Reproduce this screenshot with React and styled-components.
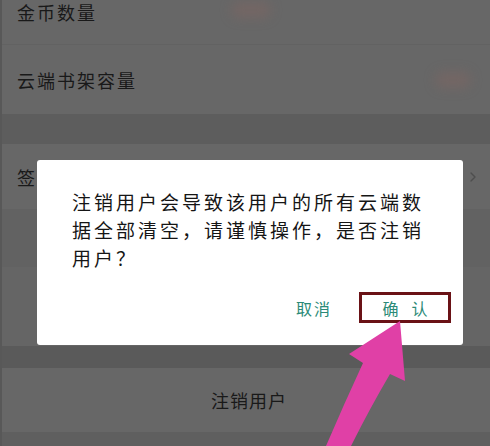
import React from "react";
import styled, { createGlobalStyle } from "styled-components";
import { ChevronRight } from "lucide-react";

const GlobalStyle = createGlobalStyle`
  html, body {
    margin: 0;
    padding: 0;
    background: #676767;
    overflow: hidden;
  }
  * { box-sizing: border-box; }
`;

const Screen = styled.div`
  position: relative;
  width: 490px;
  height: 446px;
  overflow: hidden;
  background: #5e5e5e;
  border-left: 2px solid #585858;
  font-family: "Noto Sans CJK SC", "Noto Sans", sans-serif;
  display: flex;
  flex-direction: column;
`;

const Row = styled.div`
  height: ${(p) => p.$h}px;
  flex: none;
  display: flex;
  align-items: ${(p) => (p.$top ? "flex-start" : "center")};
  justify-content: ${(p) => (p.$center ? "center" : "space-between")};
  padding: ${(p) => (p.$top ? "2px 9px 0 15px" : "0 9px 0 15px")};
  background: ${(p) => p.$bg || "#676767"};
  border-bottom: ${(p) => (p.$line ? "1px solid #626262" : "none")};
`;

const Gap = styled.div`
  height: ${(p) => p.$h}px;
  flex: none;
  background: ${(p) => p.$bg || "#5d5d5d"};
`;

const Label = styled.span`
  font-size: 18px;
  line-height: 20px;
  letter-spacing: ${(p) => p.$ls ?? 2}px;
  color: #191919;
`;

const Blurred = styled.span`
  display: inline-block;
  width: ${(p) => p.$w}px;
  height: 16px;
  margin-right: ${(p) => p.$mr}px;
  border-radius: 8px;
  background: rgba(140, 100, 95, 0.35);
  filter: blur(6px);
`;

const Overlay = styled.div`
  position: absolute;
  inset: 0;
  pointer-events: none;
`;

const Dialog = styled.div`
  position: absolute;
  left: 35px;
  top: 160px;
  width: 426px;
  height: 185px;
  background: #ffffff;
  border-radius: 3px;
  padding: 28px 35px 0 35px;
  display: flex;
  flex-direction: column;
`;

const Message = styled.p`
  margin: 0;
  font-size: 19px;
  line-height: 28px;
  letter-spacing: 3px;
  color: #151515;
`;

const Actions = styled.div`
  margin-top: 20px;
  margin-right: -23px;
  display: flex;
  justify-content: flex-end;
  align-items: center;
  gap: 15px;
`;

const ActionButton = styled.button`
  height: 31px;
  width: ${(p) => p.$w}px;
  padding: 0 0 0 ${(p) => p.$pl || 0}px;
  margin: 0;
  background: transparent;
  border: ${(p) => (p.$marked ? "3px solid #6a1216" : "none")};
  font-family: inherit;
  font-size: 16px;
  letter-spacing: ${(p) => p.$ls || 2}px;
  color: #2b8a77;
  display: flex;
  align-items: center;
  justify-content: center;
`;

const Arrow = styled.svg`
  position: absolute;
  left: 0;
  top: 0;
`;

export default function App() {
  return (
    <>
      <GlobalStyle />
      <Screen>
        <Row $h={45} $top $line>
          <Label>金币数量</Label>
          <Blurred $w={40} $mr={210} />
        </Row>
        <Row $h={69}>
          <Label>云端书架容量</Label>
          <Blurred $w={36} $mr={10} />
        </Row>
        <Gap $h={30} />
        <Row $h={65}>
          <Label>签到提醒</Label>
          <ChevronRight size={16} color="#4e4e4e" strokeWidth={2} />
        </Row>
        <Row $h={58} $bg="#626262" />
        <Row $h={79} $bg="#656565" />
        <Gap $h={22} $bg="#5a5a5a" />
        <Row $h={64} $center>
          <Label $ls={1}>注销用户</Label>
        </Row>
        <Gap $h={14} $bg="#5f5f5f" />

        <Overlay>
          <Dialog>
            <Message>
              注销用户会导致该用户的所有云端数据全部清空，请谨慎操作，是否注销用户？
            </Message>
            <Actions>
              <ActionButton $w={60}>取消</ActionButton>
              <ActionButton $w={92} $marked $ls={13} $pl={13}>
                确认
              </ActionButton>
            </Actions>
          </Dialog>
          <Arrow width="490" height="446" viewBox="0 0 490 446">
            <path
              d="M398,321 L403,381 L388,374 Q368,408 349,446 L324,446 Q342,404 361,363 L347,354 Z"
              fill="#e040a6"
            />
          </Arrow>
        </Overlay>
      </Screen>
    </>
  );
}
